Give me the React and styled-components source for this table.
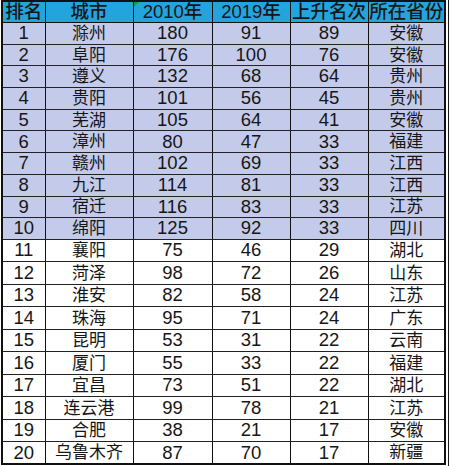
import React from 'react';
import styled, { createGlobalStyle } from 'styled-components';

const GlobalStyle = createGlobalStyle`
  body {
    margin: 0;
    background: #ffffff;
    font-family: "Liberation Sans", "Noto Sans CJK SC", sans-serif;
  }
`;

const Page = styled.div`
  width: 450px;
  height: 466px;
  padding-left: 1px;
  box-sizing: border-box;
`;

const Frame = styled.div`
  display: inline-block;
  padding: 0 2px 2px 0;
  border-right: 1.5px solid #1a1a1a;
  border-bottom: 1.5px solid #1a1a1a;
`;

const Table = styled.table`
  width: 445px;
  border-collapse: collapse;
  table-layout: fixed;
  border: 2px solid #111;
  color: #161616;
  font-size: 18px;
  line-height: 1;
`;

const HeadCell = styled.th`
  position: relative;
  height: 20px;
  padding: 0;
  background: #24a4dd;
  border: 1.5px solid #111;
  font-weight: 500;
  font-size: 18.5px;
  text-align: center;
  white-space: nowrap;

  ${(p) =>
    p.$flag &&
    `
    &::before {
      content: '';
      position: absolute;
      left: 0;
      top: 0;
      border-top: 5px solid #1d9a3a;
      border-right: 5px solid transparent;
    }
  `}
`;

const Row = styled.tr`
  height: ${(p) => (p.$top ? '21.7px' : '22.5px')};
  background: ${(p) => (p.$top ? '#c4cbea' : '#ffffff')};
`;

const Cell = styled.td`
  padding: 0;
  border-left: 1.5px solid #111;
  border-right: 1.5px solid #111;
  border-top: 1px solid #222;
  border-bottom: 1px solid #222;
  text-align: center;
  white-space: nowrap;
  font-size: ${(p) => (p.$cjk ? '17px' : '18.5px')};
`;

const columns = [
  { label: '排名', width: 43 },
  { label: '城市', width: 88 },
  { label: '2010年', width: 79 },
  { label: '2019年', width: 78 },
  { label: '上升名次', width: 78 },
  { label: '所在省份', width: 77 },
];

const rows = [
  [1, '滁州', 180, 91, 89, '安徽'],
  [2, '阜阳', 176, 100, 76, '安徽'],
  [3, '遵义', 132, 68, 64, '贵州'],
  [4, '贵阳', 101, 56, 45, '贵州'],
  [5, '芜湖', 105, 64, 41, '安徽'],
  [6, '漳州', 80, 47, 33, '福建'],
  [7, '赣州', 102, 69, 33, '江西'],
  [8, '九江', 114, 81, 33, '江西'],
  [9, '宿迁', 116, 83, 33, '江苏'],
  [10, '绵阳', 125, 92, 33, '四川'],
  [11, '襄阳', 75, 46, 29, '湖北'],
  [12, '菏泽', 98, 72, 26, '山东'],
  [13, '淮安', 82, 58, 24, '江苏'],
  [14, '珠海', 95, 71, 24, '广东'],
  [15, '昆明', 53, 31, 22, '云南'],
  [16, '厦门', 55, 33, 22, '福建'],
  [17, '宜昌', 73, 51, 22, '湖北'],
  [18, '连云港', 99, 78, 21, '江苏'],
  [19, '合肥', 38, 21, 17, '安徽'],
  [20, '乌鲁木齐', 87, 70, 17, '新疆'],
];

export default function App() {
  return (
    <>
      <GlobalStyle />
      <Page>
        <Frame>
          <Table>
            <colgroup>
              {columns.map((c) => (
                <col key={c.label} style={{ width: c.width }} />
              ))}
            </colgroup>
            <thead>
              <tr>
                {columns.map((c, i) => (
                  <HeadCell key={c.label} $flag={i === 2}>
                    {c.label}
                  </HeadCell>
                ))}
              </tr>
            </thead>
            <tbody>
              {rows.map((r) => (
                <Row key={r[0]} $top={r[0] <= 10}>
                  {r.map((v, i) => (
                    <Cell key={i} $cjk={typeof v === 'string'}>
                      {v}
                    </Cell>
                  ))}
                </Row>
              ))}
            </tbody>
          </Table>
        </Frame>
      </Page>
    </>
  );
}
